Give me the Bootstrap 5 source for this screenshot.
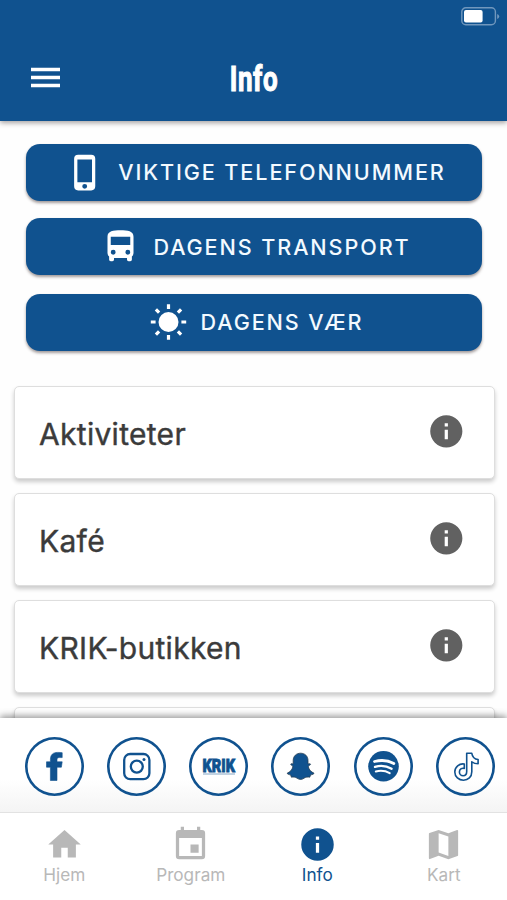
<!DOCTYPE html>
<html lang="no">
<head>
<meta charset="utf-8">
<meta name="viewport" content="width=device-width, initial-scale=1">
<title>Info</title>
<link href="https://cdn.jsdelivr.net/npm/bootstrap@5.3.0/dist/css/bootstrap.min.css" rel="stylesheet">
<style>
:root{--krik:#10528f}
body{font-family:Inter,"Liberation Sans",sans-serif;background:#fefefe}
.app{height:900px;width:507px}
.topbar{height:121px;background:var(--krik);box-shadow:0 2px 5px rgba(60,50,50,.45);flex:none;z-index:2}
.statusline{height:33px;padding:6px 7px 0 0}
.titlerow{height:88px;padding-left:30px;padding-right:30px;display:grid;grid-template-columns:1fr auto 1fr}
.screen-title{font-family:Roboto,sans-serif;font-weight:700;font-size:35.5px;line-height:40px;width:48px;letter-spacing:.8px;transform:scaleX(.73);-webkit-text-stroke:1.1px #fff;white-space:nowrap}
.menu-btn{width:30px;height:21px;margin-top:33.5px}
.screen-title{margin-top:26px;display:flex;justify-content:center}
.actions{padding:22.5px 25px 0 26px}
.action-btn{height:57px;border-radius:14px;background:var(--krik);color:#f3faff;font-size:21.6px;font-weight:500;letter-spacing:1.9px;gap:13px;box-shadow:0 2px 3px rgba(50,35,35,.45);padding:1px 0 0 4px;white-space:nowrap;border:0}
.action-btn+.action-btn{margin-top:17.5px}
.action-btn+.action-btn+.action-btn{margin-top:18.5px}
.action-btn:hover{background:var(--krik);color:#fff}
.action-btn svg{width:39px;height:39px;flex:none;margin-top:-1px}
.topics{padding:35.5px 12.5px 0 14px}
.topic{height:93px;margin-bottom:14px;flex:none;border:1px solid #dedede;border-radius:5px;box-shadow:0 3px 4px rgba(0,0,0,.2);padding:3px 28px 0 24px;color:#3b3b3b;font-size:30px;letter-spacing:.3px;-webkit-text-stroke:.4px #3b3b3b}
.topic svg{width:38.6px;height:38.6px;fill:#616161;margin-top:-5px}
.socials{height:95px;flex:none;padding:3.5px 12px 0 24.5px;background:linear-gradient(#fff 65%,#f4f4f4);box-shadow:0 -2px 7px rgba(0,0,0,.42);z-index:1;border-bottom:1px solid #e2e2e2}
.social{width:59px;height:59px;box-shadow:inset 0 0 0 2.6px var(--krik);color:var(--krik)}
.social svg{width:53px;height:53px}
.tabs{height:87px;flex:none;z-index:2;padding-left:1px}
.tab{color:#b8b8b8;font-size:17.2px;letter-spacing:0;line-height:22px;padding-top:12px}
.tab.current{color:var(--krik)}
.tab svg{width:39px;height:39px}
svg{display:block}
</style>
</head>
<body>
<div class="app d-flex flex-column overflow-hidden">
  <header class="topbar text-white">
    <div class="statusline d-flex justify-content-end">
      <svg width="39" height="20" viewBox="0 0 39 20"><rect x=".8" y="1.8" width="33.6" height="17" rx="4" fill="none" stroke="#7197bd" stroke-width="1.4"/><rect x="3" y="4" width="18.6" height="12.6" rx="2" fill="#fff"/><path d="M36.2 8v5q2-.7 2-2.500t-2-2.500z" fill="#7197bd"/></svg>
    </div>
    <div class="titlerow">
      <svg class="menu-btn" viewBox="0 0 30 21"><path d="M1 2.500h29M1 10.500h29M1 18.500h29" stroke="#fff" stroke-width="3.500"/></svg>
      <div class="screen-title">Info</div>
    </div>
  </header>

  <main class="flex-grow-1 overflow-hidden d-flex flex-column">
    <div class="actions">
      <button class="action-btn btn w-100 d-flex align-items-center justify-content-center"><svg viewBox="0 0 24 24" fill="#fff"><path d="M15.500 1h-8A2.500 2.500 0 0 0 5 3.500v17A2.500 2.500 0 0 0 7.500 23h8a2.500 2.500 0 0 0 2.500-2.500v-17A2.500 2.500 0 0 0 15.500 1zm-4 21a1.500 1.500 0 1 1 0-3 1.500 1.500 0 0 1 0 3zm4.500-4H7V4h9v14z"/></svg><span>VIKTIGE TELEFONNUMMER</span></button>
      <button class="action-btn btn w-100 d-flex align-items-center justify-content-center"><svg viewBox="0 0 24 24" fill="#fff"><path d="M4 16c0 .88.39 1.670 1 2.220V20c0 .550.450 1 1 1h1c.550 0 1-.450 1-1v-1h8v1c0 .550.450 1 1 1h1c.550 0 1-.450 1-1v-1.780c.610-.550 1-1.340 1-2.220V6c0-3.500-3.580-4-8-4s-8 .500-8 4v10zm3.500 1a1.500 1.500 0 1 1 0-3 1.500 1.500 0 0 1 0 3zm9 0a1.500 1.500 0 1 1 0-3 1.500 1.500 0 0 1 0 3zm1.500-6H6V6h12v5z"/></svg><span>DAGENS TRANSPORT</span></button>
      <button class="action-btn btn w-100 d-flex align-items-center justify-content-center"><svg viewBox="-19.500 -19 39 39" fill="#fff" stroke="#fff" stroke-width="3.200"><circle r="10" stroke="none"/><path d="M0-17.700v4.800M0 17.700v-4.800M-17.700 0h4.800M17.700 0h-4.800M-12.600-12.600l3.200 3.200M12.600-12.600l-3.200 3.200M-12.600 12.600l3.200-3.200M12.600 12.600l-3.200-3.200"/></svg><span>DAGENS VÆR</span></button>
    </div>
    <div class="topics d-flex flex-column">
      <div class="topic card flex-row align-items-center justify-content-between"><span>Aktiviteter</span><svg viewBox="0 0 24 24"><path d="M12 2a10 10 0 1 0 0 20 10 10 0 0 0 0-20zm1 15h-2v-6h2v6zm0-8h-2V7h2v2z"/></svg></div>
      <div class="topic card flex-row align-items-center justify-content-between"><span>Kafé</span><svg viewBox="0 0 24 24"><path d="M12 2a10 10 0 1 0 0 20 10 10 0 0 0 0-20zm1 15h-2v-6h2v6zm0-8h-2V7h2v2z"/></svg></div>
      <div class="topic card flex-row align-items-center justify-content-between"><span>KRIK-butikken</span><svg viewBox="0 0 24 24"><path d="M12 2a10 10 0 1 0 0 20 10 10 0 0 0 0-20zm1 15h-2v-6h2v6zm0-8h-2V7h2v2z"/></svg></div>
      <div class="topic card"></div>
    </div>
  </main>

  <div class="socials d-flex justify-content-between align-items-center">
    <div class="social rounded-circle d-flex align-items-center justify-content-center"><svg viewBox="0 0 53 53"><path fill="currentColor" stroke="currentColor" stroke-width=".6" d="M22.400 40.500V27.200h-3.900v-5.400h3.900v-2.300c0-4.900 2.600-7.100 7.300-7.100 1.800 0 3.200.1 4.500.3v4.900h-2.700c-1.800 0-2.500.8-2.500 2.300v1.900h5.200l-.8 5.400H29v13.300z"/></svg></div>
    <div class="social rounded-circle d-flex align-items-center justify-content-center"><svg viewBox="0 0 53 53" fill="none" stroke="currentColor" stroke-width="2.300"><rect x="14.200" y="14" width="25.200" height="25.200" rx="6"/><circle cx="26.800" cy="26.600" r="6"/><circle cx="34" cy="19.500" r="1.500" fill="currentColor" stroke="none"/></svg></div>
    <div class="social rounded-circle d-flex align-items-center justify-content-center"><svg viewBox="0 0 53 53" fill="currentColor"><text x="10.500" y="31.800" font-family="Roboto,sans-serif" font-weight="900" font-size="19" stroke="currentColor" stroke-width=".9" textLength="32.500" lengthAdjust="spacingAndGlyphs">KRIK</text><path d="M11 34h32" stroke="currentColor" stroke-width="1" opacity=".5"/></svg></div>
    <div class="social rounded-circle d-flex align-items-center justify-content-center"><svg viewBox="0 0 53 53"><path fill="currentColor" stroke="#273d52" stroke-width=".8" d="M26.600 13.200c-4.300 0-7.400 3-7.400 7.200v3.400c-.8.3-2.400-.5-2.500.5-.1.900 2.300 1.400 2.200 2.500-.8 3.200-3 5.200-5.600 6.300-.5 1 1.800 1.500 3.400 1.900l.7 2.200c2.300-.4 4-.1 5.500.9 2.700 1.800 4.700 1.800 7.400 0 1.500-1 3.200-1.300 5.500-.9l.7-2.200c1.600-.4 3.900-.9 3.400-1.900-2.600-1.100-4.800-3.100-5.600-6.300-.1-1.100 2.300-1.600 2.200-2.500-.1-1-1.700-.2-2.500-.5v-3.400c0-4.200-3.100-7.200-7.400-7.200z"/></svg></div>
    <div class="social rounded-circle d-flex align-items-center justify-content-center"><svg viewBox="0 0 53 53" fill="none" stroke="#fff" stroke-linecap="round"><circle cx="26.500" cy="26.300" r="15.300" fill="currentColor" stroke="none"/><path stroke-width="2.800" d="M17.500 21.500c6.500-1.700 13.500-1.200 19.300 2"/><path stroke-width="2.400" d="M18 26.800c5.900-1.700 11.500-1 16.600 1.900"/><path stroke-width="2" d="M18.800 31.500c5-1.200 9.700-.7 13.900 1.700"/></svg></div>
    <div class="social rounded-circle d-flex align-items-center justify-content-center"><svg viewBox="0 0 53 53" fill="none" stroke="currentColor" stroke-width="1.600" stroke-linejoin="round"><path d="M27.700 13.300h5.100c.6 3.700 2.700 5.800 6.300 6.200v4.300c-2.500 0-4.500-.7-6.300-2v10c0 5.200-3.700 8.400-8.300 8.400-4.700 0-8.700-3.500-8.700-8.200 0-5 4.400-8.800 9.500-8v4.500c-2.600-.8-4.900.9-4.900 3.400 0 2.100 1.700 3.800 3.700 3.800 2.200 0 3.600-1.600 3.600-4.200z"/></svg></div>
  </div>

  <nav class="tabs bg-white d-flex">
    <div class="tab col-3 d-flex flex-column align-items-center"><svg viewBox="0 0 24 24" fill="currentColor"><path d="M10 20v-6h4v6h5v-8h3L12 3 2 12h3v8z"/></svg><span>Hjem</span></div>
    <div class="tab col-3 d-flex flex-column align-items-center"><svg viewBox="0 0 24 24" fill="currentColor"><path d="M17 12h-5v5h5v-5zM16 1v2H8V1H6v2H5a2 2 0 0 0-2 2v14a2 2 0 0 0 2 2h14a2 2 0 0 0 2-2V5a2 2 0 0 0-2-2h-1V1h-2zm3 18H5V8h14v11z"/></svg><span>Program</span></div>
    <div class="tab current col-3 d-flex flex-column align-items-center"><svg viewBox="0 0 24 24" fill="currentColor"><path d="M12 2a10 10 0 1 0 0 20 10 10 0 0 0 0-20zm1 15h-2v-6h2v6zm0-8h-2V7h2v2z"/></svg><span>Info</span></div>
    <div class="tab col-3 d-flex flex-column align-items-center"><svg viewBox="0 0 24 24" fill="currentColor"><path d="M20.500 3l-.160.030L15 5.100 9 3 3.360 4.900c-.210.070-.360.250-.360.480V20.500c0 .280.220.500.500.500l.160-.030L9 18.900l6 2.100 5.640-1.900c.210-.070.360-.250.360-.480V3.500c0-.280-.220-.500-.500-.500zM15 19l-6-2.110V5l6 2.110V19z"/></svg><span>Kart</span></div>
  </nav>
</div>
<script src="https://cdn.jsdelivr.net/npm/bootstrap@5.3.0/dist/js/bootstrap.bundle.min.js"></script>
</body>
</html>
